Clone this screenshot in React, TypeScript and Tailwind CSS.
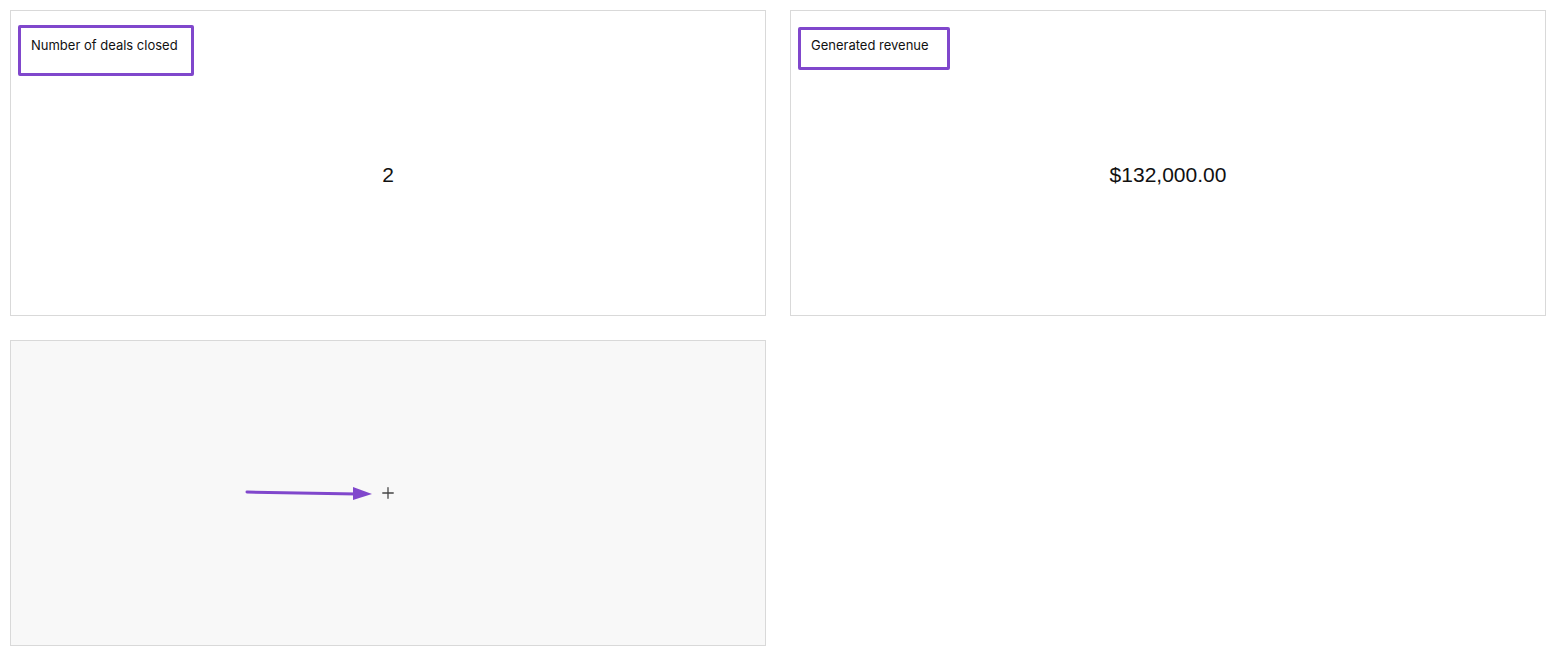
import { Plus } from "lucide-react";

type Metric = {
	title: string;
	value: string;
	// annotation box drawn over the title
	box: string;
};

const metrics: Metric[] = [
	{
		title: "Number of deals closed",
		value: "2",
		box: "left-[7px] top-[14px] w-[176px] h-[51px]",
	},
	{
		title: "Generated revenue",
		value: "$132,000.00",
		box: "left-[7px] top-[16px] w-[152px] h-[43px]",
	},
];

function MetricCard({ title, value, box }: Metric) {
	return (
		<div className="relative flex h-[306px] flex-col border border-[#d9d9d9] bg-white">
			<div className="px-[20px] pt-[26px] text-[13px] leading-4 text-[#111] font-['Inter',sans-serif]">
				{title}
			</div>
			<div className="flex flex-1 items-center justify-center pb-[18px] text-[21px] text-[#111] font-['Liberation_Sans',Arial,sans-serif]">
				{value}
			</div>
			<div className={`absolute rounded-[2px] border-[3px] border-[#8047cc] ${box}`} />
		</div>
	);
}

export default function App() {
	return (
		<div className="grid min-h-[665px] grid-cols-[756px_756px] content-start gap-x-[24px] gap-y-[24px] bg-white p-[10px]">
			{metrics.map((m) => (
				<MetricCard key={m.title} {...m} />
			))}
			<div className="relative flex h-[306px] items-center justify-center border border-[#d9d9d9] bg-[#f8f8f8]">
				<Plus className="h-[18px] w-[18px] text-[#444]" strokeWidth={1.7} />
				<svg
					className="absolute left-[234px] top-[144px]"
					width="130"
					height="16"
					viewBox="0 0 130 16"
				>
					<line x1="2" y1="7" x2="112" y2="9" stroke="#8047cc" strokeWidth="3" strokeLinecap="round" />
					<polygon points="108,2 127,9 108,15" fill="#8047cc" />
				</svg>
			</div>
		</div>
	);
}
